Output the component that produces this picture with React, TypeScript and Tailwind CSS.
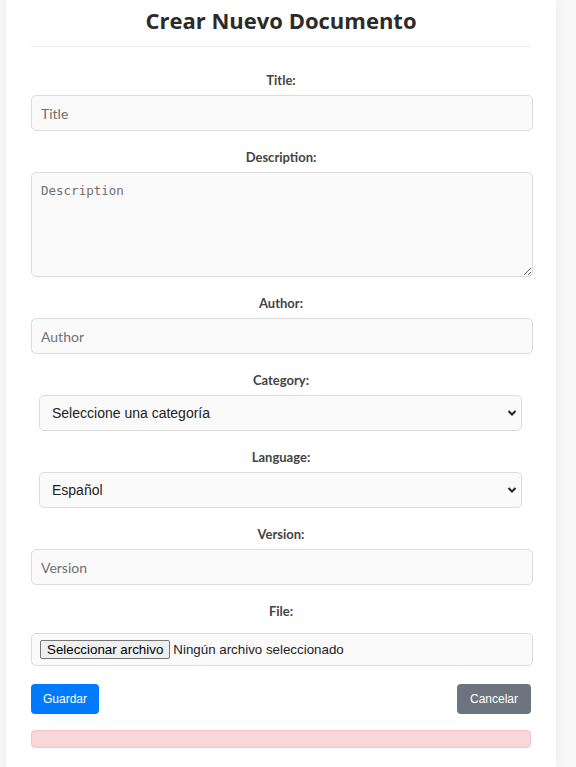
import React from "react";

const labelCls =
  "block text-center text-[13px] leading-[16px] font-bold text-[#444] mb-[7px] font-['Lato',sans-serif]";
const inputCls =
  "block w-[calc(100%+2px)] h-[36px] px-[9px] text-[14px] rounded-[5px] border border-[#dcdcdc] bg-[#fafafa] text-[#333] placeholder:text-[#707070] font-['Lato',sans-serif] outline-none";

const Field = ({ label, children }: { label: string; children: React.ReactNode }) => (
  <div className="mb-[18px]">
    <label className={labelCls}>{label}</label>
    {children}
  </div>
);

const Select = ({ children, defaultValue }: { children: React.ReactNode; defaultValue: string }) => (
  <div className="relative mx-auto ml-[8px] w-[483px]">
    <select
      defaultValue={defaultValue}
      className="block w-full h-[36px] pl-[12px] pr-[30px] appearance-none text-[14px] rounded-[5px] border border-[#dcdcdc] bg-[#fafafa] text-[#222] font-['Liberation_Sans',Arial,sans-serif] outline-none"
    >
      {children}
    </select>
    <svg
      className="pointer-events-none absolute right-[5px] top-[14px]"
      width="10"
      height="8"
      viewBox="0 0 10 8"
    >
      <path d="M1.5 2 L5 5.5 L8.5 2" fill="none" stroke="#222" strokeWidth="2" />
    </svg>
  </div>
);

const App = () => {
  return (
    <div className="min-h-screen bg-[#f8f8f8]">
      <div className="ml-[6px] w-[550px] min-h-[767px] bg-white shadow-[0_0_12px_rgba(0,0,0,0.06)] px-[25px] pt-[5px] pb-[20px]">
        <h2 className="text-center text-[22px] leading-[30px] font-bold text-[#2b2b2b] pb-[11px] border-b border-[#ececec] font-['Open_Sans',sans-serif]">
          Crear Nuevo Documento
        </h2>

        <form className="mt-[25px]">
          <Field label="Title:">
            <input className={inputCls} placeholder="Title" />
          </Field>

          <Field label="Description:">
            <textarea
              className="block w-[calc(100%+2px)] h-[105px] px-[9px] py-[9px] text-[12.5px] rounded-[5px] border border-[#dcdcdc] bg-[#fafafa] placeholder:text-[#707070] font-['DejaVu_Sans_Mono',monospace] outline-none"
              placeholder="Description"
            />
          </Field>

          <Field label="Author:">
            <input className={inputCls} placeholder="Author" />
          </Field>

          <Field label="Category:">
            <Select defaultValue="">
              <option value="">Seleccione una categoría</option>
            </Select>
          </Field>

          <Field label="Language:">
            <Select defaultValue="es">
              <option value="es">Español</option>
            </Select>
          </Field>

          <Field label="Version:">
            <input className={inputCls} placeholder="Version" />
          </Field>

          <div className="mb-[18px]">
            <label className={labelCls + " !mb-[14px]"}>File:</label>
            <div className="flex items-center w-[calc(100%+2px)] h-[33px] px-[8px] rounded-[5px] border border-[#dcdcdc] bg-[#fafafa] font-['Liberation_Sans',Arial,sans-serif] text-[13.33px] text-[#222]">
              <span className="h-[19px] px-[6px] flex items-center border border-[#767676] rounded-[2px] bg-[#efefef] text-black">
                Seleccionar archivo
              </span>
              <span className="ml-[3px]">Ningún archivo seleccionado</span>
            </div>
          </div>

          <div className="flex justify-between items-center">
            <button
              type="button"
              className="h-[30px] px-[12px] rounded-[4px] bg-[#007bff] text-white text-[12px] font-['Liberation_Sans',Arial,sans-serif]"
            >
              Guardar
            </button>
            <button
              type="button"
              className="h-[30px] px-[13px] rounded-[4px] bg-[#6c757d] text-white text-[12px] font-['Liberation_Sans',Arial,sans-serif]"
            >
              Cancelar
            </button>
          </div>

          <div className="mt-[16px] h-[18px] rounded-[4px] border border-[#f5c2c7] bg-[#f8d7da]" />
        </form>
      </div>
    </div>
  );
};

export default App;
